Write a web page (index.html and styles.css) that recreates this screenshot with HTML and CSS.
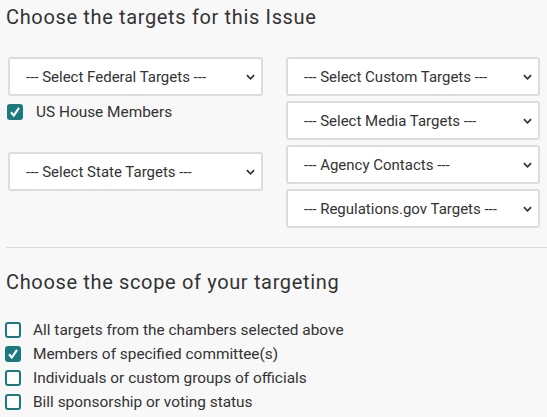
FILE: index.html
```html
<!DOCTYPE html>
<html>
<head>
<meta charset="utf-8">
<link rel="stylesheet" href="styles.css">
</head>
<body>
<div class="page">
  <h2 class="heading">Choose the targets for this Issue</h2>
  <div class="targets">
    <div class="col">
      <div class="select"><span>--- Select Federal Targets ---</span><svg class="chev" viewBox="0 0 10 6" width="9" height="6"><path d="M1 1l4 4 4-4" fill="none" stroke="#333" stroke-width="1.9"/></svg></div>
      <label class="check first">
        <span class="box on"><svg viewBox="0 0 16 16" width="16" height="16"><path d="M4 8.2l2.8 3.3L12 3.8" fill="none" stroke="#fff" stroke-width="2.2"/></svg></span>
        <span class="lbl">US House Members</span>
      </label>
      <div class="select state"><span>--- Select State Targets ---</span><svg class="chev" viewBox="0 0 10 6" width="9" height="6"><path d="M1 1l4 4 4-4" fill="none" stroke="#333" stroke-width="1.9"/></svg></div>
    </div>
    <div class="col right">
      <div class="select"><span>--- Select Custom Targets ---</span><svg class="chev" viewBox="0 0 10 6" width="9" height="6"><path d="M1 1l4 4 4-4" fill="none" stroke="#333" stroke-width="1.9"/></svg></div>
      <div class="select"><span>--- Select Media Targets ---</span><svg class="chev" viewBox="0 0 10 6" width="9" height="6"><path d="M1 1l4 4 4-4" fill="none" stroke="#333" stroke-width="1.9"/></svg></div>
      <div class="select"><span>--- Agency Contacts ---</span><svg class="chev" viewBox="0 0 10 6" width="9" height="6"><path d="M1 1l4 4 4-4" fill="none" stroke="#333" stroke-width="1.9"/></svg></div>
      <div class="select"><span>--- Regulations.gov Targets ---</span><svg class="chev" viewBox="0 0 10 6" width="9" height="6"><path d="M1 1l4 4 4-4" fill="none" stroke="#333" stroke-width="1.9"/></svg></div>
    </div>
  </div>
  <hr class="rule">
  <h2 class="heading second">Choose the scope of your targeting</h2>
  <div class="scope">
    <label class="check"><span class="box"></span><span class="lbl">All targets from the chambers selected above</span></label>
    <label class="check"><span class="box on"><svg viewBox="0 0 16 16" width="16" height="16"><path d="M4 8.2l2.8 3.3L12 3.8" fill="none" stroke="#fff" stroke-width="2.2"/></svg></span><span class="lbl">Members of specified committee(s)</span></label>
    <label class="check"><span class="box"></span><span class="lbl">Individuals or custom groups of officials</span></label>
    <label class="check"><span class="box"></span><span class="lbl">Bill sponsorship or voting status</span></label>
  </div>
</div>
</body>
</html>
```

FILE: styles.css
```css
html, body {
  margin: 0;
  padding: 0;
  background: #f8f8f8;
}
body {
  font-family: "Roboto", "Liberation Sans", sans-serif;
  color: #333;
}
.page {
  padding: 0 0 0 6px;
}
.heading {
  margin: 0;
  padding-top: 4px;
  font-size: 20px;
  font-weight: 400;
  letter-spacing: 0.65px;
  line-height: 26px;
  color: #333;
}
.heading.second {
  padding-top: 0;
  margin-top: 21px;
}
.targets {
  display: grid;
  grid-template-columns: 255px 254px;
  column-gap: 23px;
  padding: 27px 0 0 2px;
}
.col {
  display: flex;
  flex-direction: column;
}
.col.right {
  gap: 5px;
}
.select {
  box-sizing: border-box;
  height: 39px;
  background: #fff;
  border: 2px solid #dcdcdc;
  border-radius: 3px;
  display: flex;
  align-items: center;
  justify-content: space-between;
  padding: 0 6px 0 16px;
  font-size: 15px;
  color: #333;
}
.select.state {
  margin-top: 28px;
}
.check {
  display: flex;
  align-items: center;
  height: 24px;
}
.check.first {
  margin-top: 4px;
  margin-left: -1px;
  height: 24px;
}
.box {
  box-sizing: border-box;
  width: 16px;
  height: 16px;
  border: 2px solid #1a7a7d;
  border-radius: 3px;
  background: #fff;
  flex: none;
  display: flex;
}
.box.on {
  background: #1a7a7d;
  border: none;
}
.lbl {
  margin-left: 12px;
  font-size: 15.4px;
}
.first .lbl {
  margin-left: 13px;
}
.rule {
  margin: 19px 0 0 0;
  border: none;
  border-top: 1px solid #dcdcdc;
}
.scope {
  padding-top: 23px;
  margin-left: -1px;
}
```
